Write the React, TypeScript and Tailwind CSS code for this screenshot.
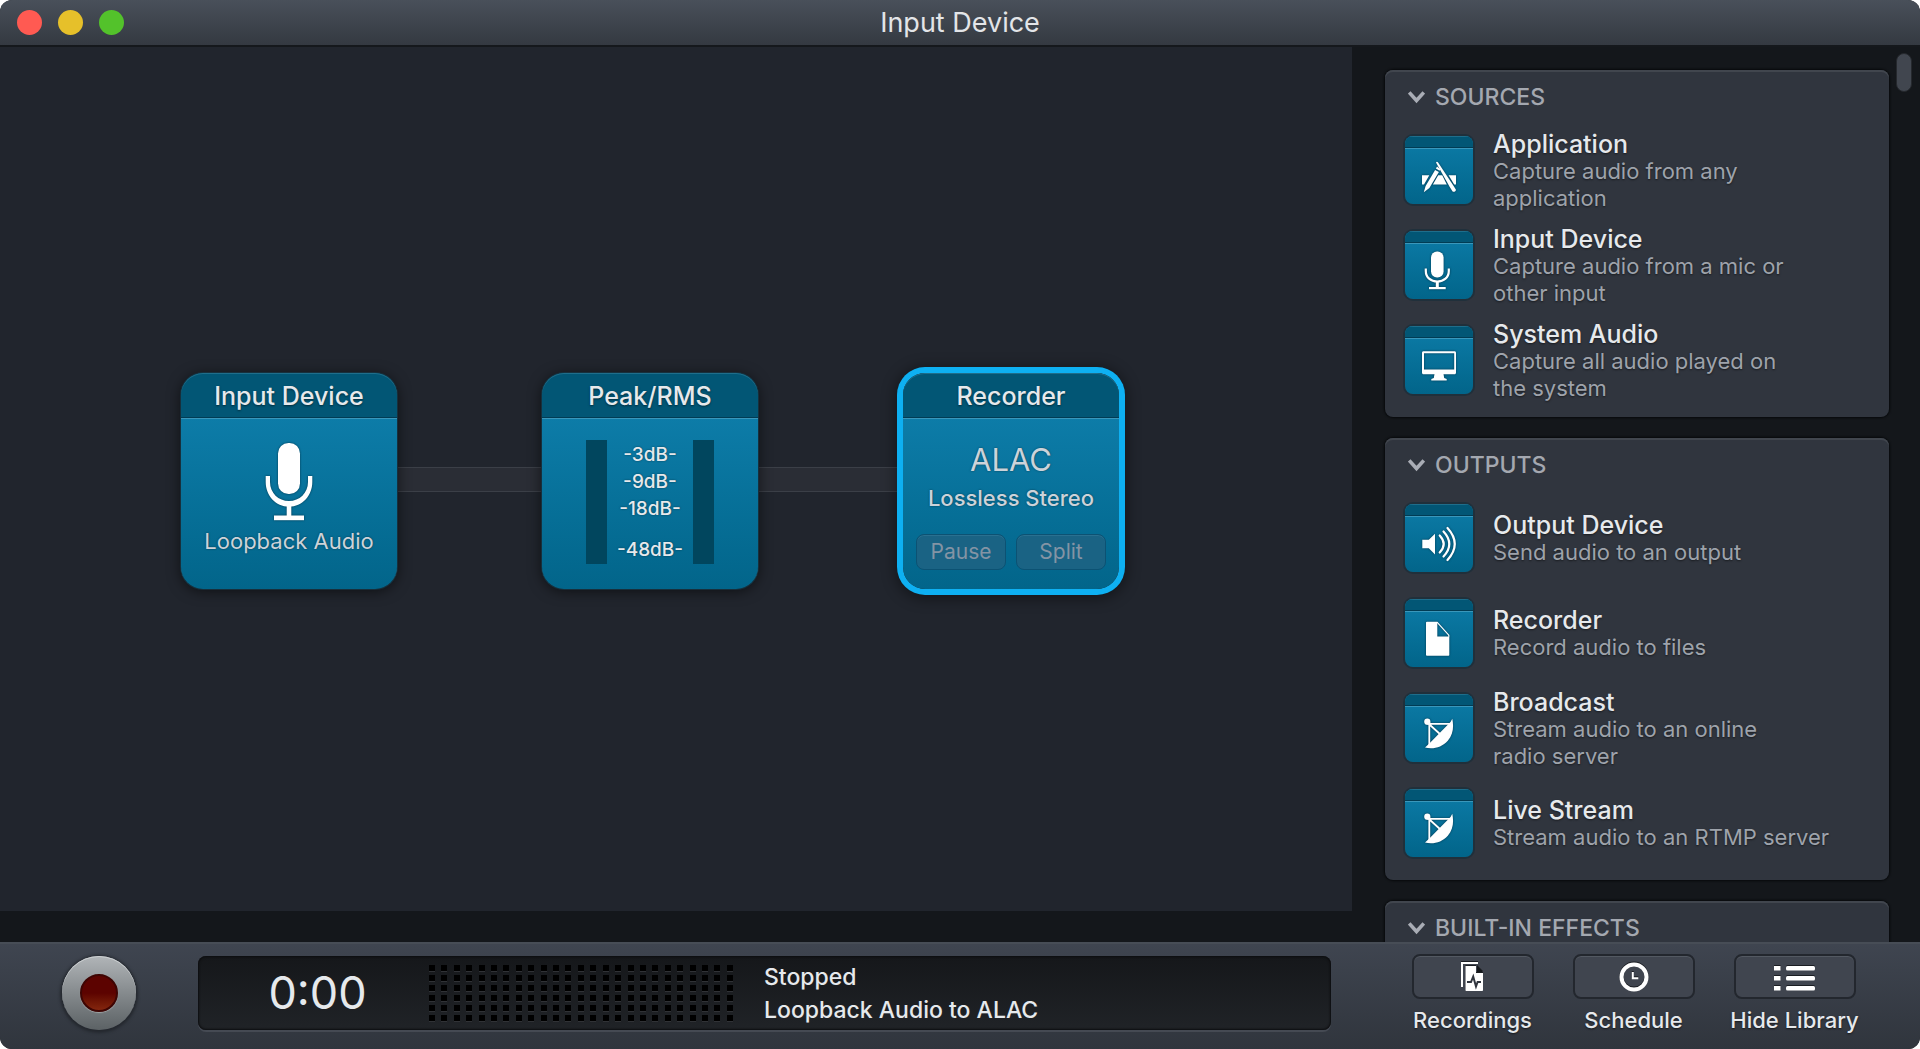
import React from "react";

const tileGradient = "bg-linear-to-b from-[#0d7ca8] to-[#02658a]";

/* ---------- glyphs ---------- */

function BigMic() {
  return (
    <svg width="48" height="80" viewBox="0 0 48 80" fill="#fff" aria-hidden="true" className="drop-shadow-[0_0_1px_rgba(0,40,60,0.8)]">
      <rect x="13" y="1" width="22" height="51" rx="10.5" />
      <path d="M.7 34H5v6c0 11 8.500 19 19 19s19-8 19-19v-6h4.300v6c0 13.500-10 24.700-23.300 24.700S.7 53.500.7 40z" />
      <rect x="21.700" y="63" width="4.600" height="12" />
      <rect x="9" y="73.500" width="30" height="4.700" />
    </svg>
  );
}

function AppGlyph() {
  return (
    <>
      <path d="M17 39.300h7.300l-5.300 9.300h-2z M33.200 39.300h4l4.600 9.300H27.900z M43.600 39.300H51v9.300h-1.800z" />
      <path d="M33.900 36.100l-3.800-2.200-9.500 16-1.800 6.300 5.600-4.100z" />
      <path d="M34.500 34.700l-3.600-2.100 1.200-2 3.300 2.600z" />
      <path d="M31 26.400c.6-.8 1.500-.7 2.100.2L47.500 48.300l3.300 5.200c.6 1.400-1.700 3-3.200 1.900l-3.300-5.200z" />
    </>
  );
}

function MicGlyph() {
  return (
    <>
      <rect x="26" y="20.500" width="12.600" height="26" rx="6" />
      <path d="M20.800 37.500v2.500c0 6.500 5 10.500 11.500 10.500S43.800 46.500 43.800 40v-2.500" fill="none" stroke="#fff" strokeWidth="2.200" />
      <rect x="30.800" y="50" width="3" height="7" />
      <rect x="24" y="56" width="16.700" height="2.200" />
    </>
  );
}

function MonitorGlyph() {
  return (
    <>
      <path fillRule="evenodd" d="M18.500 25.300h31c.9 0 1.500.6 1.500 1.500v20c0 .9-.6 1.500-1.500 1.500h-31c-.9 0-1.500-.6-1.500-1.500v-20c0-.9.6-1.500 1.500-1.500zM19 27.300v16.300h30.200V27.300z" />
      <path d="M29.500 48h9l.7 4 2.500 1v1.500H26.300V53l2.500-1z" />
    </>
  );
}

function SpeakerGlyph() {
  return (
    <>
      <path d="M17.300 35.700h6.500l6.200-6v20.800l-6.200-6.200h-6.500z" />
      <g fill="none" stroke="#fff" strokeWidth="2.200" strokeLinecap="round">
        <path d="M34.700 31.500q8 8.500 0 17" />
        <path d="M38.500 27.500q11.600 12.500 0 25" />
        <path d="M42.500 24q14.500 16 0 32" />
      </g>
    </>
  );
}

function FileGlyph() {
  return (
    <>
      <path d="M22 22.700h10.300v14.700h12V56c0 .5-.3.800-.8.800H22c-.6 0-1-.3-1-.8V23.500c0-.5.4-.8 1-.8z" />
      <path d="M32 23.200l11.800 13v1.500" fill="none" stroke="#fff" strokeWidth="1.200" />
    </>
  );
}

function DishGlyph() {
  return (
    <>
      <circle cx="22.300" cy="27.700" r="3.100" />
      <path d="M47.300 24.700c1.500 7.800 1.200 15.500-4.500 22-5.800 6.500-14.600 9-22.800 6.800l4.300-4L45.500 28z" />
      <path d="M24.300 28v23M22.300 29.900H46M22.300 28.500L36 41" fill="none" stroke="#fff" strokeWidth="1.800" />
    </>
  );
}

function Chevron() {
  return (
    <svg width="17" height="14" viewBox="0 0 17 14" fill="none" stroke="#a9adb5" strokeWidth="3.600" aria-hidden="true">
      <path d="M1.200 2.500l7.300 8 7.300-8" />
    </svg>
  );
}

/* ---------- canvas nodes ---------- */

type NodeProps = { title: string; place: string; selected?: boolean; children: React.ReactNode };

function Node({ title, place, selected, children }: NodeProps) {
  return (
    <section
      className={`absolute top-[326px] flex size-[216px] flex-col rounded-[22px] ${place} ${
        selected
          ? "shadow-[0_0_0_6px_#0eb0f2,0_2px_14px_8px_rgba(0,0,0,0.4)]"
          : "shadow-[0_0_0_1px_#17303d,0_2px_14px_rgba(0,0,0,0.6)]"
      }`}
    >
      <h2 className="h-[45px] shrink-0 rounded-t-[22px] border-b border-[#013c54] bg-[#025675] text-center text-[25px]/[46px] font-medium text-[#e6e9ec] inset-shadow-[0_1px_0_#1f6e8b] text-shadow-[0_1px_2px_rgba(0,0,0,0.5)]">
        {title}
      </h2>
      <div className={`flex flex-1 flex-col items-center rounded-b-[22px] ${tileGradient} inset-shadow-[0_1px_0_#3a97bb] text-shadow-[0_0_2px_rgba(0,0,0,0.5)]`}>
        {children}
      </div>
    </section>
  );
}

function Cable({ place }: { place: string }) {
  return <div className={`absolute top-[420px] h-[25px] border-y border-[#3b3f47] bg-[#2a2d35] ${place}`} />;
}

function NodeButton({ label }: { label: string }) {
  return (
    <button
      type="button"
      disabled
      className="h-9 w-[90px] rounded-lg border border-[#0c5273] bg-[#1a6384] text-[21px] text-[#8494a4] inset-shadow-[0_1px_0_#2a7090]"
    >
      {label}
    </button>
  );
}

/* ---------- library ---------- */

type Item = { name: string; text: string; glyph: React.ReactNode };

const sources: Item[] = [
  { name: "Application", text: "Capture audio from any\napplication", glyph: <AppGlyph /> },
  { name: "Input Device", text: "Capture audio from a mic or\nother input", glyph: <MicGlyph /> },
  { name: "System Audio", text: "Capture all audio played on\nthe system", glyph: <MonitorGlyph /> },
];

const outputs: Item[] = [
  { name: "Output Device", text: "Send audio to an output", glyph: <SpeakerGlyph /> },
  { name: "Recorder", text: "Record audio to files", glyph: <FileGlyph /> },
  { name: "Broadcast", text: "Stream audio to an online\nradio server", glyph: <DishGlyph /> },
  { name: "Live Stream", text: "Stream audio to an RTMP server", glyph: <DishGlyph /> },
];

function Group({ title, items }: { title: string; items: Item[] }) {
  return (
    <section className="shrink-0 rounded-lg bg-[#30353e] pb-2.5 shadow-[0_0_2px_1px_#07090b] inset-shadow-[0_2px_0_#41464e]">
      <h2 className="h-[52px]">
        <button type="button" aria-expanded="true" className="flex h-[54px] items-center gap-2.5 pl-[23px] text-[23px] font-medium text-[#a4a8b0]">
          <Chevron />
          {title}
        </button>
      </h2>
      <ul>
        {items.map((item) => (
          <li key={item.name} className="flex h-[95px] items-center gap-5 pl-5">
            <div className={`size-[68px] shrink-0 overflow-hidden rounded-lg ${tileGradient} shadow-[0_0_0_2px_#20303b]`}>
              <div className="h-3 border-b border-[#013c54] bg-[#025675] inset-shadow-[0_1px_0_#1f6e8b]" />
              <div className="h-px bg-[#3a97bb]" />
              <svg viewBox="0 13 68 55" width="68" height="55" fill="#fff" aria-hidden="true" className="drop-shadow-[0_0_1px_rgba(0,40,60,0.8)]">
                {item.glyph}
              </svg>
            </div>
            <div className="pt-0.5 text-shadow-[0_1px_2px_rgba(0,0,0,0.5)]">
              <h3 className="text-[25px]/7 font-medium text-[#e6e9ec]">{item.name}</h3>
              <p className="text-[22px]/[27px] whitespace-pre-line text-[#9ea3ab]">{item.text}</p>
            </div>
          </li>
        ))}
      </ul>
    </section>
  );
}

/* ---------- footer ---------- */

function LevelGrid() {
  return (
    <div className="flex w-[304px] flex-col gap-1 py-2" aria-hidden="true">
      {Array.from({ length: 6 }, (_, row) => (
        <div key={row} className="flex justify-between">
          {Array.from({ length: 25 }, (_, col) => (
            <span key={col} className="size-1.5 bg-black shadow-[0_1px_0_#303236]" />
          ))}
        </div>
      ))}
    </div>
  );
}

function ToolButton({ label, children }: { label: string; children: React.ReactNode }) {
  return (
    <button type="button" className="flex w-[161px] flex-col items-center">
      <span className="flex h-[45px] w-[122px] items-center justify-center rounded-lg border-2 border-[#23272e] bg-[#40454f] inset-shadow-[0_1px_0_#535962]">
        <svg width="44" height="34" viewBox="0 0 44 34" fill="#fff" aria-hidden="true" className="drop-shadow-[0_-1px_0_#1b1e23]">
          {children}
        </svg>
      </span>
      <span className="text-[22px]/[42px] font-medium whitespace-nowrap text-[#e6e9ec] text-shadow-[0_1px_2px_rgba(0,0,0,0.6)]">{label}</span>
    </button>
  );
}

export default function App() {
  return (
    <div className="h-screen bg-white font-['Inter',sans-serif]">
      <div className="flex h-full flex-col overflow-hidden rounded-xl bg-[#14171b]">
        <header className="relative flex h-[47px] shrink-0 items-center border-b-2 border-[#15181c] bg-linear-to-b from-[#49505a] to-[#343941] pl-[17px]">
          <div className="flex gap-4">
            <button type="button" aria-label="Close" className="size-[25px] rounded-full bg-[#ff5a52]" />
            <button type="button" aria-label="Minimize" className="size-[25px] rounded-full bg-[#e6c02a]" />
            <button type="button" aria-label="Zoom" className="size-[25px] rounded-full bg-[#53c22b]" />
          </div>
          <h1 className="pointer-events-none absolute inset-x-0 text-center text-[27px]/[47px] text-[#e3e5e8]">Input Device</h1>
        </header>

        <div className="flex min-h-0 flex-1">
          <main className="relative mb-[31px] flex-1 overflow-hidden bg-[#21252d]">
            <Cable place="left-[397px] w-[145px]" />
            <Cable place="left-[759px] w-[145px]" />

            <Node title="Input Device" place="left-[181px]">
              <div className="pt-6">
                <BigMic />
              </div>
              <p className="text-[22px]/[39px] text-[#ccd3da]">Loopback Audio</p>
            </Node>

            <Node title="Peak/RMS" place="left-[542px]">
              <div className="flex pt-[22px]">
                <div className="h-[124px] w-[21px] bg-[#01465e]" />
                <ul className="w-[86px] pt-px text-center text-[19px]/[27px] font-medium text-[#e6e9ec]">
                  <li>-3dB-</li>
                  <li>-9dB-</li>
                  <li>-18dB-</li>
                  <li className="pt-3.5">-48dB-</li>
                </ul>
                <div className="h-[124px] w-[21px] bg-[#01465e]" />
              </div>
            </Node>

            <Node title="Recorder" place="left-[903px]" selected>
              <p className="pt-[23px] text-[31px]/[38px] text-[#ccd3da]">ALAC</p>
              <p className="text-[22px]/[38px] font-medium text-[#ccd3da]">Lossless Stereo</p>
              <div className="flex gap-2.5 pt-[17px]">
                <NodeButton label="Pause" />
                <NodeButton label="Split" />
              </div>
            </Node>
          </main>

          <aside className="relative flex w-[568px] shrink-0 flex-col gap-[21px] overflow-hidden pt-[23px] pr-[31px] pl-[33px]">
            <Group title="SOURCES" items={sources} />
            <Group title="OUTPUTS" items={outputs} />
            <Group title="BUILT-IN EFFECTS" items={[]} />
            <div className="absolute top-1.5 right-2 h-[39px] w-4 rounded-full border border-[#25282d] bg-[#41464f]" />
          </aside>
        </div>

        <footer className="flex h-[107px] shrink-0 items-start border-t-2 border-[#474d56] bg-linear-to-b from-[#3f4550] to-[#30353d] pt-2.5">
          <div className="flex w-[198px] shrink-0 justify-center pt-0.5">
            <button
              type="button"
              aria-label="Record"
              className="flex size-[74px] items-center justify-center rounded-full bg-linear-to-b from-[#b1b5b8] to-[#5c6265] shadow-[0_1px_3px_2px_#24282e] inset-shadow-[0_1px_0_#cdd0d2]"
            >
              <span className="size-[38px] rounded-full border-2 border-[#3e0503] bg-linear-to-b from-[#5c0300] from-50% to-[#84260f] shadow-[0_1px_1px_#a3a7a9]" />
            </button>
          </div>

          <div className="mt-0.5 flex h-[74px] flex-1 items-center rounded-lg bg-linear-to-b from-[#15171a] to-[#202327] shadow-[0_2px_0_#454a53] inset-shadow-[0_0_2px_1px_#0c0d0f]">
            <time className="w-[231px] pl-2 text-center text-[45px]/[74px] text-[#e6e9ec]">0:00</time>
            <LevelGrid />
            <div className="pt-px pl-[31px] text-[23px]/[33px] font-medium text-[#e6e9ec]" role="status">
              <p>Stopped</p>
              <p>Loopback Audio to ALAC</p>
            </div>
          </div>

          <nav className="flex w-[589px] shrink-0 pl-[61px]">
            <ToolButton label="Recordings">
              <path d="M10 27V2h17v2H12v23z" />
              <path fillRule="evenodd" d="M14.500 6h10.500v7h7v17c0 .6-.4 1-1 1H15.500c-.6 0-1-.4-1-1z" />
              <path d="M26 6l6 6h-6z" fill="#15181c" />
              <path d="M16 22h4l2.200-5.500 2.800 10 1.600-4.500H30" fill="none" stroke="#30353e" strokeWidth="2" />
            </ToolButton>
            <ToolButton label="Schedule">
              <circle cx="22" cy="17" r="12.500" fill="none" stroke="#fff" strokeWidth="4" />
              <path d="M20.800 12v6.300h5.500" fill="none" stroke="#fff" strokeWidth="2" />
            </ToolButton>
            <ToolButton label="Hide Library">
              {[6, 16, 26].map((y) => (
                <g key={y}>
                  <rect x="1" y={y} width="6.500" height="4.500" />
                  <rect x="13" y={y} width="29" height="4.500" rx="1.500" />
                </g>
              ))}
            </ToolButton>
          </nav>
        </footer>
      </div>
    </div>
  );
}
